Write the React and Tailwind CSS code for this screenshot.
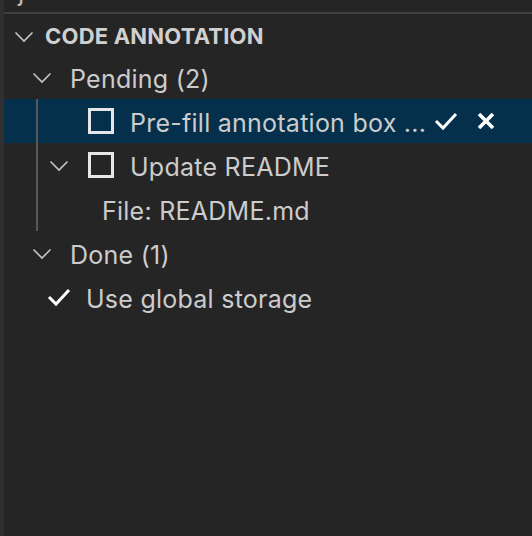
import React from 'react';

const Chevron = () => (
  <svg width="20" height="12" viewBox="0 0 20 12" fill="none">
    <polyline points="1.5,1.5 10,10 18.5,1.5" stroke="#c5c5c5" strokeWidth="1.6" />
  </svg>
);

const Checkbox = () => (
  <svg width="26" height="26" viewBox="0 0 26 26" fill="none">
    <rect x="1.5" y="1.5" width="23" height="23" stroke="#e6e6e6" strokeWidth="3" />
  </svg>
);

const Check = () => (
  <svg width="24" height="20" viewBox="0 0 24 20" fill="none">
    <polyline points="2,10 9,17 22,3" stroke="#ffffff" strokeWidth="3" />
  </svg>
);

const Cross = () => (
  <svg width="18" height="18" viewBox="0 0 18 18" fill="none">
    <path d="M2 2 L16 16 M16 2 L2 16" stroke="#ffffff" strokeWidth="3.6" />
  </svg>
);

const Guide = () => (
  <>
    <div className="w-[32px] shrink-0" />
    <div className="w-[2px] self-stretch shrink-0 bg-[#585858]" />
  </>
);

export default function App() {
  return (
    <div
      className="w-[532px] h-[536px] flex bg-[#252526] text-[#cccccc] overflow-hidden"
      style={{ fontFamily: 'Inter, "Noto Sans", sans-serif' }}
    >
      <div className="w-[4px] shrink-0 bg-[#303030]" />
      <div className="flex-1 flex flex-col">
        {/* tail of the pane above */}
        <div className="h-[12px] overflow-hidden">
          <div className="-mt-[24px] pl-[14px] text-[26px] leading-[32px] text-[#bbbbbb] whitespace-nowrap">
            {'  j'}
          </div>
        </div>
        <div className="h-[2px] bg-[#404040]" />

        <div className="h-[41px] flex items-center pl-[10px]">
          <span className="mt-[4px]"><Chevron /></span>
          <span className="ml-[11px] mt-[4px] text-[22px] font-bold tracking-[0.2px] text-[#d0d0d0]">
            CODE ANNOTATION
          </span>
        </div>

        <div className="h-[44px] flex items-center pl-[28px] text-[25px] tracking-[0.25px]">
          <span className="mt-[2px]"><Chevron /></span>
          <span className="ml-[18px] mt-[5px]">Pending (2)</span>
        </div>

        <div className="h-[44px] flex bg-[#04304c] text-[25px] tracking-[0.25px]">
          <Guide />
          <div className="flex-1 flex items-center pl-[50px] pr-[37px]">
            <Checkbox />
            <span className="ml-[16px] mt-[5px] whitespace-nowrap">Pre-fill annotation box ...</span>
            <div className="ml-auto flex items-center gap-[19px]">
              <Check />
              <Cross />
            </div>
          </div>
        </div>

        <div className="h-[44px] flex text-[25px] tracking-[0.25px]">
          <Guide />
          <div className="flex-1 flex items-center pl-[11px]">
            <span className="mt-[2px]"><Chevron /></span>
            <span className="ml-[19px]"><Checkbox /></span>
            <span className="ml-[16px] mt-[5px]">Update README</span>
          </div>
        </div>

        <div className="h-[44px] flex text-[25px] tracking-[0.25px]">
          <Guide />
          <div className="flex-1 flex items-center pl-[64px]">
            <span className="mt-[5px]">File: README.md</span>
          </div>
        </div>

        <div className="h-[44px] flex items-center pl-[28px] text-[25px] tracking-[0.25px]">
          <span className="mt-[2px]"><Chevron /></span>
          <span className="ml-[18px] mt-[5px]">Done (1)</span>
        </div>

        <div className="h-[44px] flex items-center pl-[43px] text-[25px] tracking-[0.25px]">
          <Check />
          <span className="ml-[15px] mt-[5px]">Use global storage</span>
        </div>
      </div>
    </div>
  );
}
